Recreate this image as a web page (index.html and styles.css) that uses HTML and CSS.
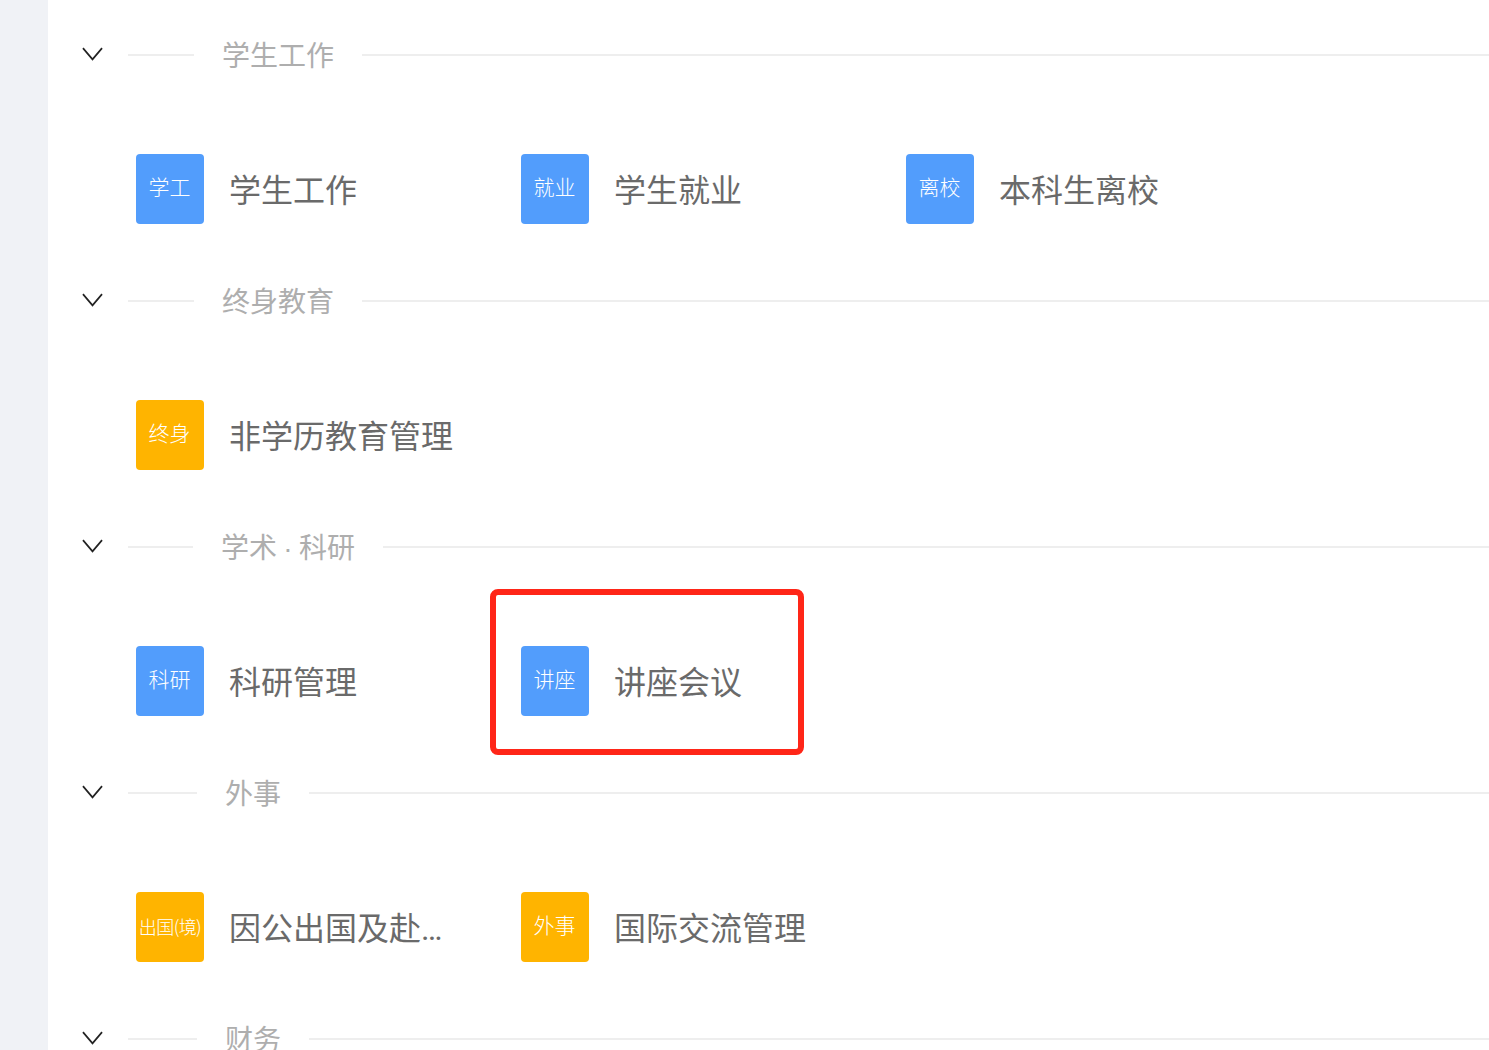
FILE: index.html
```html
<!DOCTYPE html>
<html lang="zh-CN">
<head>
<meta charset="utf-8">
<title>应用列表</title>
<link rel="stylesheet" href="styles.css">
</head>
<body>
<div class="page">
  <aside class="rail"></aside>
  <main class="main">
    <section class="group">
      <header class="group-head">
        <span class="toggle"><svg class="chev" viewBox="0 0 22 15"><path d="M1 1.2 11 13 21 1.2"/></svg></span>
        <div class="divider"><span class="divider-text">学生工作</span></div>
      </header>
      <div class="apps">
        <a class="app"><span class="tile blue">学工</span><span class="app-name">学生工作</span></a>
        <a class="app"><span class="tile blue">就业</span><span class="app-name">学生就业</span></a>
        <a class="app"><span class="tile blue">离校</span><span class="app-name">本科生离校</span></a>
      </div>
    </section>
    <section class="group">
      <header class="group-head">
        <span class="toggle"><svg class="chev" viewBox="0 0 22 15"><path d="M1 1.2 11 13 21 1.2"/></svg></span>
        <div class="divider"><span class="divider-text">终身教育</span></div>
      </header>
      <div class="apps">
        <a class="app"><span class="tile amber">终身</span><span class="app-name">非学历教育管理</span></a>
      </div>
    </section>
    <section class="group">
      <header class="group-head">
        <span class="toggle"><svg class="chev" viewBox="0 0 22 15"><path d="M1 1.2 11 13 21 1.2"/></svg></span>
        <div class="divider"><span class="divider-text tight">学术 · 科研</span></div>
      </header>
      <div class="apps">
        <a class="app"><span class="tile blue">科研</span><span class="app-name">科研管理</span></a>
        <a class="app highlighted"><span class="tile blue">讲座</span><span class="app-name">讲座会议</span></a>
      </div>
    </section>
    <section class="group">
      <header class="group-head">
        <span class="toggle"><svg class="chev" viewBox="0 0 22 15"><path d="M1 1.2 11 13 21 1.2"/></svg></span>
        <div class="divider"><span class="divider-text">外事</span></div>
      </header>
      <div class="apps">
        <a class="app"><span class="tile amber small">出国(境)</span><span class="app-name">因公出国及赴港澳台管理</span></a>
        <a class="app"><span class="tile amber">外事</span><span class="app-name">国际交流管理</span></a>
      </div>
    </section>
    <section class="group">
      <header class="group-head">
        <span class="toggle"><svg class="chev" viewBox="0 0 22 15"><path d="M1 1.2 11 13 21 1.2"/></svg></span>
        <div class="divider"><span class="divider-text">财务</span></div>
      </header>
    </section>
  </main>
</div>
</body>
</html>
```
FILE: styles.css
```css
html, body {
  margin: 0;
  height: 1050px;
  overflow: hidden;
  background: #fff;
}

body {
  font-family: "Liberation Sans", "Noto Sans CJK SC", sans-serif;
  font-weight: 400;
}

.page {
  display: flex;
  height: 1050px;
  overflow: hidden;
}

.rail {
  flex: 0 0 48px;
  background: #f0f2f6;
}

.main {
  flex: 1 1 auto;
  min-width: 0;
  padding-top: 33px;
}

.group {
  height: 246px;
}

.group-head {
  display: flex;
  align-items: center;
  height: 44px;
}

.toggle {
  flex: 0 0 80px;
  box-sizing: border-box;
  padding: 0 0 2px 8px;
  display: flex;
  justify-content: center;
}

.chev {
  display: block;
  width: 21px;
  height: 14.3px;
  fill: none;
  stroke: #222;
  stroke-width: 1.8;
}

.divider {
  flex: 0 0 1490px;
  display: flex;
  align-items: center;
}

.divider::before,
.divider::after {
  content: "";
  height: 2px;
  background: #eeeeee;
}

.divider::before { width: 5%; }
.divider::after { width: 95%; }

.divider-text {
  flex: none;
  padding: 4px 28px 0;
  font-size: 28px;
  line-height: 44px;
  color: #aeaeae;
  white-space: nowrap;
}

.tight {
  word-spacing: -1.5px;
}

.apps {
  display: flex;
  margin-top: 77px;
  padding-left: 88px;
}

.app {
  flex: 0 0 385px;
  display: flex;
  align-items: center;
  height: 70px;
  position: relative;
}

.tile {
  flex: 0 0 68px;
  height: 70px;
  padding: 0 1px 6px 0;
  box-sizing: border-box;
  display: flex;
  align-items: center;
  justify-content: center;
  border-radius: 4px;
  color: #fff;
  font-size: 21px;
  font-weight: 300;
  white-space: nowrap;
}

.tile.small {
  padding: 0 0 3px;
  font-family: "Noto Sans CJK SC", sans-serif;
  font-size: 18px;
  letter-spacing: -0.6px;
}

.blue { background: #529dfc; }
.amber { background: #ffb400; }

.app-name {
  margin-left: 25px;
  padding-top: 4px;
  width: 226px;
  font-family: Roboto, "Noto Sans CJK SC", sans-serif;
  font-size: 32px;
  line-height: 44px;
  color: #6a6a6a;
  white-space: nowrap;
  overflow: hidden;
  text-overflow: ellipsis;
}

.highlighted::after {
  content: "";
  position: absolute;
  left: -31px;
  top: -57px;
  width: 302px;
  height: 154px;
  border: 6px solid #ff2618;
  border-radius: 8px;
}
```
